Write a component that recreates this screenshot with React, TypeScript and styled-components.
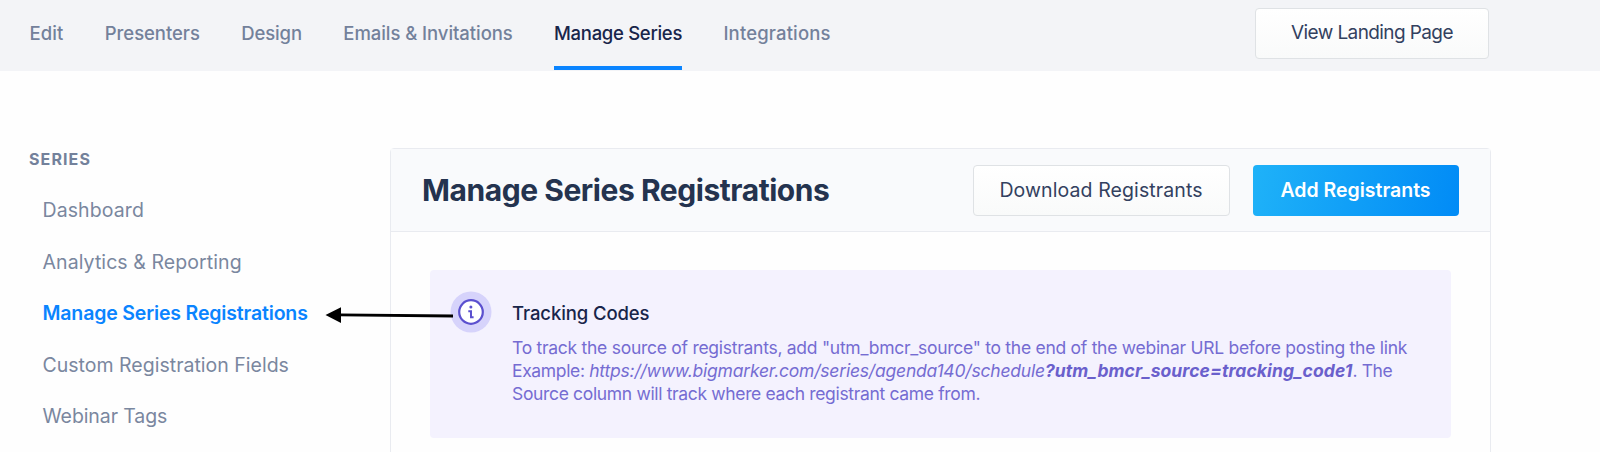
import React from 'react';
import styled, { createGlobalStyle } from 'styled-components';

const GlobalStyle = createGlobalStyle`
  * {
    box-sizing: border-box;
  }

  body {
    margin: 0;
    background: #fefefe;
    font-family: Inter, "Liberation Sans", sans-serif;
    overflow: hidden;
  }
`;

const Page = styled.div`
  height: 452px;
  overflow: hidden;
`;

const TopBar = styled.header`
  display: flex;
  justify-content: space-between;
  align-items: flex-start;
  height: 71px;
  padding: 0 111px 0 29.5px;
  background: #f3f4f7;
`;

const Nav = styled.nav`
  display: flex;
  gap: 41.3px;
`;

const NavItem = styled.a<{ $active?: boolean; $track: number }>`
  height: 70px;
  padding-top: 21px;
  border-bottom: 4px solid ${({ $active }) => ($active ? '#0a84ff' : 'transparent')};
  color: ${({ $active }) => ($active ? '#18254a' : '#73819b')};
  font-size: 18.5px;
  font-weight: 500;
  line-height: 24px;
  letter-spacing: ${({ $track }) => $track}px;
  white-space: nowrap;
`;

const Button = styled.button<{ $width: number; $primary?: boolean; $track: number }>`
  width: ${({ $width }) => $width}px;
  height: 51px;
  padding: 0 0 1px;
  border: ${({ $primary }) => ($primary ? '0' : '1px solid #dfe2e5')};
  border-radius: 4px;
  background: ${({ $primary }) => ($primary
    ? 'linear-gradient(100deg, #1fb2f8, #018bf6)'
    : 'linear-gradient(#ffffff, #f9fafa)')};
  color: ${({ $primary }) => ($primary ? '#ffffff' : '#33415f')};
  font-family: inherit;
  font-size: 19.5px;
  font-weight: ${({ $primary }) => ($primary ? 600 : 400)};
  letter-spacing: ${({ $track }) => $track}px;
  white-space: nowrap;
`;

const LandingButton = styled(Button)`
  margin-top: 8px;
  padding-bottom: 3px;
  font-size: 19px;
`;

const Main = styled.main`
  display: flex;
  padding-top: 77px;
`;

const Sidebar = styled.aside`
  width: 390px;
  padding-left: 29px;
`;

const SidebarTitle = styled.h2`
  margin: 1px 0 26px;
  color: #73819b;
  font-size: 16px;
  font-weight: 700;
  line-height: 20px;
  letter-spacing: 1.1px;
`;

const SidebarItem = styled.a<{ $active?: boolean; $track: number }>`
  display: block;
  height: 51.5px;
  padding-left: 13.5px;
  color: ${({ $active }) => ($active ? '#0a84ff' : '#7a879f')};
  font-size: 19.5px;
  font-weight: ${({ $active }) => ($active ? 600 : 400)};
  line-height: 30px;
  letter-spacing: ${({ $track }) => $track}px;
`;

const Panel = styled.section`
  width: 1101px;
  height: 340px;
  border: 1px solid #e9ebf0;
  border-radius: 4px 4px 0 0;
`;

const PanelHeader = styled.div`
  display: flex;
  align-items: center;
  height: 83px;
  padding: 0 31.5px 0 31px;
  border-bottom: 1px solid #e9ebf0;
  background: #f9fafc;
`;

const Title = styled.h1`
  flex: 1;
  margin: 0;
  color: #24334f;
  font-size: 30px;
  font-weight: 650;
  line-height: 40px;
  letter-spacing: -0.45px;
`;

const Actions = styled.div`
  display: flex;
  gap: 23px;
`;

const Notice = styled.div`
  display: flex;
  width: 1021px;
  height: 168px;
  margin: 38px 0 0 39px;
  padding: 20.5px 0 0 20px;
  border-radius: 4px;
  background: #f4f2fe;
`;

const InfoIcon = styled.svg`
  flex: none;
  width: 42px;
  height: 42px;
`;

const NoticeBody = styled.div`
  padding: 9.5px 0 0 20px;
`;

const NoticeTitle = styled.h3`
  margin: 0 0 10px;
  color: #18254a;
  font-size: 18.5px;
  font-weight: 500;
  line-height: 26px;
  letter-spacing: -0.1px;
`;

const NoticeLine = styled.div<{ $track: number }>`
  color: #756cd2;
  font-size: 17.5px;
  font-weight: 400;
  line-height: 23.2px;
  letter-spacing: ${({ $track }) => $track}px;
  white-space: nowrap;
`;

const Url = styled.em`
  letter-spacing: -0.2px;

  strong {
    color: #6a60cc;
    font-weight: 700;
    letter-spacing: 0.1px;
  }
`;

// Callout arrow drawn over the page, from the notice icon to the active sidebar item
const Arrow = styled.svg`
  position: absolute;
  top: 305px;
  left: 324px;
  width: 130px;
  height: 20px;
`;

const App = () => (
  <Page>
    <GlobalStyle />
    <TopBar>
      <Nav>
        <NavItem $track={0.1}>Edit</NavItem>
        <NavItem $track={-0.05}>Presenters</NavItem>
        <NavItem $track={-0.1}>Design</NavItem>
        <NavItem $track={-0.06}>Emails &amp; Invitations</NavItem>
        <NavItem $active $track={-0.3}>Manage Series</NavItem>
        <NavItem $track={0.15}>Integrations</NavItem>
      </Nav>
      <LandingButton $width={234} $track={-0.6}>View Landing Page</LandingButton>
    </TopBar>
    <Main>
      <Sidebar>
        <SidebarTitle>SERIES</SidebarTitle>
        <SidebarItem $track={0.1}>Dashboard</SidebarItem>
        <SidebarItem $track={0.08}>Analytics &amp; Reporting</SidebarItem>
        <SidebarItem $active $track={-0.16}>Manage Series Registrations</SidebarItem>
        <SidebarItem $track={0.01}>Custom Registration Fields</SidebarItem>
        <SidebarItem $track={-0.1}>Webinar Tags</SidebarItem>
      </Sidebar>
      <Panel>
        <PanelHeader>
          <Title>Manage Series Registrations</Title>
          <Actions>
            <Button $width={257} $track={0.1}>Download Registrants</Button>
            <Button $primary $width={206} $track={0}>Add Registrants</Button>
          </Actions>
        </PanelHeader>
        <Notice>
          <InfoIcon viewBox="0 0 42 42">
            <circle cx="21" cy="21" r="20.5" fill="#d6d3fb" />
            <circle cx="21" cy="21" r="11.8" fill="#fff" stroke="#5b50cf" strokeWidth="2.2" />
            <circle cx="20.9" cy="15.9" r="1.5" fill="#5b50cf" />
            <path d="M18.3 20.2H21V26.2M20 26.2H23.6" fill="none" stroke="#5b50cf" strokeWidth="2" />
          </InfoIcon>
          <NoticeBody>
            <NoticeTitle>Tracking Codes</NoticeTitle>
            <NoticeLine $track={-0.27}>
              To track the source of registrants, add "utm_bmcr_source" to the end of the webinar URL before posting the link
            </NoticeLine>
            <NoticeLine $track={-0.35}>
              Example: <Url>https://www.bigmarker.com/series/agenda140/schedule<strong>?utm_bmcr_source=tracking_code1</strong></Url>. The
            </NoticeLine>
            <NoticeLine $track={-0.34}>
              Source column will track where each registrant came from.
            </NoticeLine>
          </NoticeBody>
        </Notice>
      </Panel>
    </Main>
    <Arrow viewBox="0 0 130 20">
      <path d="M15 9.8L129 11" stroke="#000" strokeWidth="2.8" />
      <path d="M1.5 10L17 2.3V18Z" fill="#000" />
    </Arrow>
  </Page>
);

export default App;
